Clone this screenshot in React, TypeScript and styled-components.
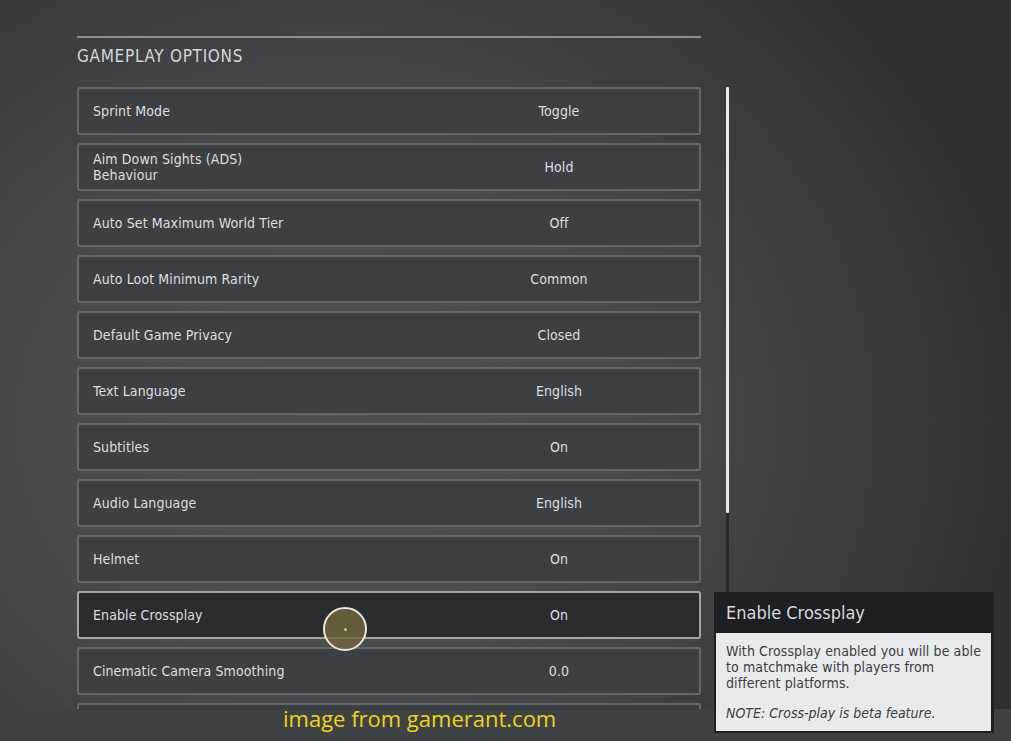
import React from "react";
import styled, { createGlobalStyle } from "styled-components";

const Global = createGlobalStyle`
  html, body { margin: 0; padding: 0; background: #3b3f42; }
  * { box-sizing: border-box; }
`;

const Screen = styled.div`
  position: relative;
  width: 1011px;
  height: 741px;
  overflow: hidden;
  background:
    radial-gradient(ellipse 700px 620px at 330px 420px, #4d5154 0%, #464a4d 45%, #373b3e 80%, #2d3134 100%);
  font-family: "DejaVu Sans Condensed", "DejaVu Sans", sans-serif;
  display: flex;
  flex-direction: column;
`;

const Main = styled.div`
  display: flex;
  padding-left: 77px;
  height: 709px;
`;

const Panel = styled.section`
  width: 624px;
  display: flex;
  flex-direction: column;
  padding-top: 36px;
`;

const Rule = styled.div`
  height: 2px;
  background: #8c9093;
`;

const Title = styled.h2`
  margin: 8px 0 0 0;
  height: 41px;
  font-size: 17px;
  font-weight: normal;
  letter-spacing: 0.7px;
  color: #d4d6d8;
  line-height: 20px;
`;

const List = styled.div`
  flex: 1;
  overflow: hidden;
  display: flex;
  flex-direction: column;
  gap: 8px;
`;

const Row = styled.div<{ $active?: boolean }>`
  flex: 0 0 48px;
  display: grid;
  grid-template-columns: 1fr 280px;
  align-items: center;
  border: 2px solid ${(p) => (p.$active ? "#a2a5a8" : "#64686b")};
  border-radius: 3px;
  background: ${(p) => (p.$active ? "#2a2d30" : "#3d4043")};
  color: #dcdee0;
  font-size: 14px;
  letter-spacing: 0.1px;
`;

const Label = styled.div`
  padding-left: 14px;
  line-height: 16px;
`;

const Value = styled.div`
  text-align: center;
`;

const ScrollTrack = styled.div`
  margin-left: 25px;
  margin-top: 87px;
  width: 3px;
  height: 515px;
  background: #272a2d;
  display: flex;
  flex-direction: column;
`;

const ScrollThumb = styled.div`
  height: 426px;
  background: #e6e8ea;
  border-radius: 1px;
`;

const Footer = styled.div`
  flex: 1;
  background: #3e4245;
`;

const Tooltip = styled.div`
  position: absolute;
  left: 714px;
  top: 592px;
  width: 280px;
  background: #1d1f22;
  padding: 0 3px 2px 2px;
`;

const TipHead = styled.div`
  height: 41px;
  padding-left: 10px;
  display: flex;
  align-items: center;
  font-size: 18px;
  color: #d8dadc;
`;

const TipBody = styled.div`
  background: #e8eaec;
  padding: 10px 6px 10px 10px;
  color: #3b3e41;
  font-size: 14px;
  line-height: 16px;
  white-space: nowrap;
`;

const TipNote = styled.p`
  margin: 14px 0 0 0;
  font-style: italic;
  font-size: 14px;
`;

const TipText = styled.p`
  margin: 0;
  letter-spacing: 0.1px;
`;

const Cursor = styled.div`
  position: absolute;
  left: 323px;
  top: 607px;
  width: 44px;
  height: 44px;
  border-radius: 50%;
  border: 2px solid #e9e6dc;
  background: rgba(110, 100, 60, 0.85);
  display: flex;
  align-items: center;
  justify-content: center;
  &::after {
    content: "";
    width: 3px;
    height: 3px;
    border-radius: 50%;
    background: #d8c860;
  }
`;

const Watermark = styled.div`
  position: absolute;
  left: 283px;
  top: 702px;
  font-family: "Open Sans", "Noto Sans", sans-serif;
  font-size: 22px;
  color: #ecd614;
  line-height: 32px;
`;

const rows: { label: React.ReactNode; value: string; active?: boolean }[] = [
  { label: "Sprint Mode", value: "Toggle" },
  { label: <>Aim Down Sights (ADS)<br />Behaviour</>, value: "Hold" },
  { label: "Auto Set Maximum World Tier", value: "Off" },
  { label: "Auto Loot Minimum Rarity", value: "Common" },
  { label: "Default Game Privacy", value: "Closed" },
  { label: "Text Language", value: "English" },
  { label: "Subtitles", value: "On" },
  { label: "Audio Language", value: "English" },
  { label: "Helmet", value: "On" },
  { label: "Enable Crossplay", value: "On", active: true },
  { label: "Cinematic Camera Smoothing", value: "0.0" },
  { label: "", value: "" },
];

export default function App() {
  return (
    <>
      <Global />
      <Screen>
        <Main>
          <Panel>
            <Rule />
            <Title>GAMEPLAY OPTIONS</Title>
            <List>
              {rows.map((r, i) => (
                <Row key={i} $active={r.active}>
                  <Label>{r.label}</Label>
                  <Value>{r.value}</Value>
                </Row>
              ))}
            </List>
          </Panel>
          <ScrollTrack>
            <ScrollThumb />
          </ScrollTrack>
        </Main>
        <Footer />
        <Cursor />
        <Tooltip>
          <TipHead>Enable Crossplay</TipHead>
          <TipBody>
            <TipText>
              With Crossplay enabled you will be able
              <br />
              to matchmake with players from
              <br />
              different platforms.
            </TipText>
            <TipNote>NOTE: Cross-play is beta feature.</TipNote>
          </TipBody>
        </Tooltip>
        <Watermark>image from gamerant.com</Watermark>
      </Screen>
    </>
  );
}
